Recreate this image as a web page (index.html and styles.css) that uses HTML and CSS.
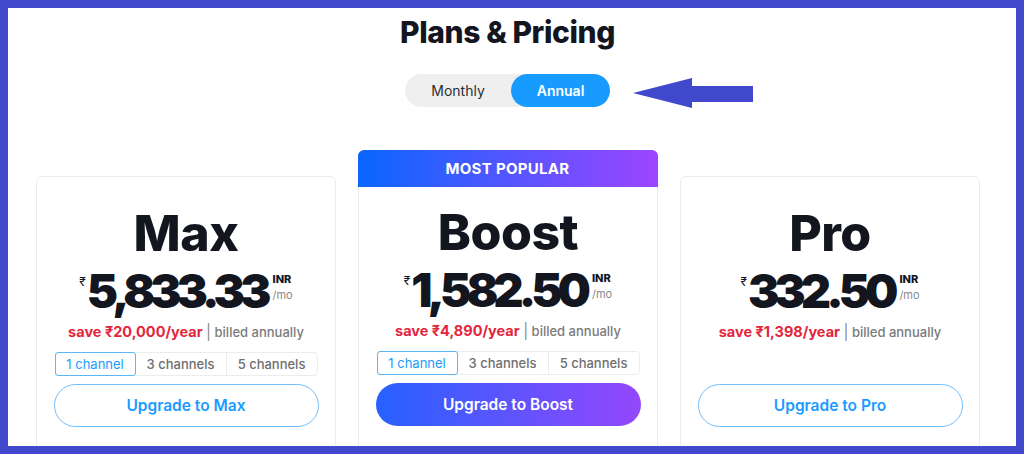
FILE: index.html
```html
<!DOCTYPE html>
<html>
<head>
    <title>Plans &amp; Pricing</title>
    <link rel="stylesheet" href="styles.css">
</head>
<body>
    <div class="frame">
        <h1 class="title">Plans &amp; Pricing</h1>

        <div class="toggle-row">
            <div class="toggle">
                <span class="toggle-option">Monthly</span>
                <span class="toggle-option active">Annual</span>
                <!-- arrow annotation pointing at the toggle -->
                <svg class="arrow" width="120" height="32" viewBox="0 0 120 32">
                    <polygon points="0,16 59,1 59,9 120,9 120,25 59,25 59,31" fill="#4048cc"/>
                </svg>
            </div>
        </div>

        <div class="plans">
            <div class="card">
                <div class="card-body">
                    <h2 class="plan-name">Max</h2>
                    <div class="price">
                        <span class="currency">₹</span>
                        <span class="amount">5,833.33</span>
                        <span class="unit"><b>INR</b><small>/mo</small></span>
                    </div>
                    <p class="save"><span class="save-amount">save ₹20,000/year</span> <span class="sep">|</span> billed annually</p>
                    <div class="channels">
                        <span class="channel selected">1 channel</span>
                        <span class="channel">3 channels</span>
                        <span class="channel">5 channels</span>
                    </div>
                    <button class="upgrade">Upgrade to Max</button>
                </div>
            </div>

            <div class="card popular">
                <div class="banner">MOST POPULAR</div>
                <div class="card-body">
                    <h2 class="plan-name">Boost</h2>
                    <div class="price">
                        <span class="currency">₹</span>
                        <span class="amount">1,582.50</span>
                        <span class="unit"><b>INR</b><small>/mo</small></span>
                    </div>
                    <p class="save"><span class="save-amount">save ₹4,890/year</span> <span class="sep">|</span> billed annually</p>
                    <div class="channels">
                        <span class="channel selected">1 channel</span>
                        <span class="channel">3 channels</span>
                        <span class="channel">5 channels</span>
                    </div>
                    <button class="upgrade filled">Upgrade to Boost</button>
                </div>
            </div>

            <div class="card">
                <div class="card-body">
                    <h2 class="plan-name">Pro</h2>
                    <div class="price">
                        <span class="currency">₹</span>
                        <span class="amount">332.50</span>
                        <span class="unit"><b>INR</b><small>/mo</small></span>
                    </div>
                    <p class="save"><span class="save-amount">save ₹1,398/year</span> <span class="sep">|</span> billed annually</p>
                    <div class="channels empty"></div>
                    <button class="upgrade">Upgrade to Pro</button>
                </div>
            </div>
        </div>
    </div>
</body>
</html>
```

FILE: styles.css
```css
/* page */
body {
    margin: 0;
    font-family: Inter, "Noto Sans", sans-serif;
    color: #13151f;
    background: #fff;
}

/* blue frame round the screenshot */
.frame {
    box-sizing: border-box;
    height: 454px;
    border: 8px solid #4248cc;
    overflow: hidden;
    background: #fff;
}

.title {
    margin: 6px 9px 0 0;
    text-align: center;
    font-size: 30px;
    font-weight: 800;
    letter-spacing: -0.4px;
    line-height: 36px;
}

/* monthly / annual switch */
.toggle-row {
    display: flex;
    justify-content: center;
    padding-right: 9px;
    margin-top: 24px;
}

.toggle {
    position: relative;
    display: flex;
    background: #efefef;
    border-radius: 17px;
    height: 33px;
}

.toggle-option {
    display: flex;
    align-items: center;
    justify-content: center;
    width: 106px;
    font-size: 14px;
    color: #2b2d36;
    border-radius: 17px;
}

.toggle-option.active {
    width: 99px;
    background: #189bff;
    color: #fff;
    font-weight: 600;
}

.arrow {
    position: absolute;
    left: 228px;
    top: 3px;
}

/* plan cards */
.plans {
    display: grid;
    grid-template-columns: repeat(3, 300px);
    justify-content: center;
    align-items: start;
    column-gap: 22px;
    padding-right: 9px;
    margin-top: 43px;
}

.card {
    margin-top: 26px;
    border: 1px solid #ebebeb;
    border-radius: 6px;
    height: 320px;
    box-sizing: border-box;
}

.card.popular {
    margin-top: 0;
    height: 346px;
    border-top: none;
}

.banner {
    height: 37px;
    margin: 0 -1px;
    border-radius: 6px 6px 0 0;
    background: linear-gradient(90deg, #0a66ff, #9d45ff);
    color: #fff;
    font-size: 15px;
    font-weight: 700;
    letter-spacing: 0.3px;
    display: flex;
    align-items: center;
    justify-content: center;
}

.card-body {
    display: flex;
    flex-direction: column;
    align-items: center;
    padding: 26px 17px 0 18px;
}

.popular .card-body {
    padding-top: 15px;
}

.plan-name {
    margin: 0;
    font-size: 50px;
    font-weight: 800;
    line-height: 60px;
    letter-spacing: -0.5px;
}

.price {
    display: flex;
    align-items: flex-start;
    margin-top: 2px;
    height: 50px;
}

.currency {
    font-size: 12px;
    margin-top: 9px;
    margin-right: 1px;
}

.amount {
    font-size: 47px;
    font-weight: 900;
    line-height: 52px;
    letter-spacing: -5px;
}

.unit {
    display: flex;
    flex-direction: column;
    margin-left: 6px;
    margin-top: 8px;
}

.unit b {
    font-size: 11px;
    font-weight: 800;
    line-height: 13px;
}

.unit small {
    font-size: 11px;
    color: #8a8a8a;
    line-height: 13px;
    margin-top: 3px;
}

.save {
    margin: 7px 0 0;
    font-size: 13px;
    font-weight: 500;
    color: #7b7b7b;
}

.save-amount {
    color: #e3263b;
    font-size: 14.5px;
    font-weight: 700;
}

.sep {
    font-weight: 400;
    color: #888;
    font-size: 15px;
}

.channels {
    display: flex;
    margin-top: 11px;
    width: 263px;
    height: 24px;
    border: 1px solid #ececec;
    border-radius: 4px;
    box-sizing: border-box;
}

.channels.empty {
    border-color: transparent;
}

.channel {
    display: flex;
    align-items: center;
    justify-content: center;
    flex: 91;
    font-size: 13px;
    font-weight: 500;
    color: #6e6e6e;
    border-left: 1px solid #ececec;
}

.channel.selected {
    flex: 80;
    margin: -1px 0 -1px -1px;
    border: 1px solid #5cb6f6;
    border-radius: 3px;
    color: #1a9bff;
    font-weight: 400;
}

.channel.selected + .channel {
    border-left: none;
}

.upgrade {
    margin-top: 8px;
    width: 265px;
    height: 43px;
    border-radius: 22px;
    border: 1.5px solid #72bdfc;
    background: #fff;
    color: #1a9bff;
    font-family: inherit;
    font-size: 15.5px;
    font-weight: 600;
    cursor: pointer;
}

.upgrade.filled {
    border: none;
    background: linear-gradient(90deg, #2761ff, #9447fb);
    color: #fff;
}
```
